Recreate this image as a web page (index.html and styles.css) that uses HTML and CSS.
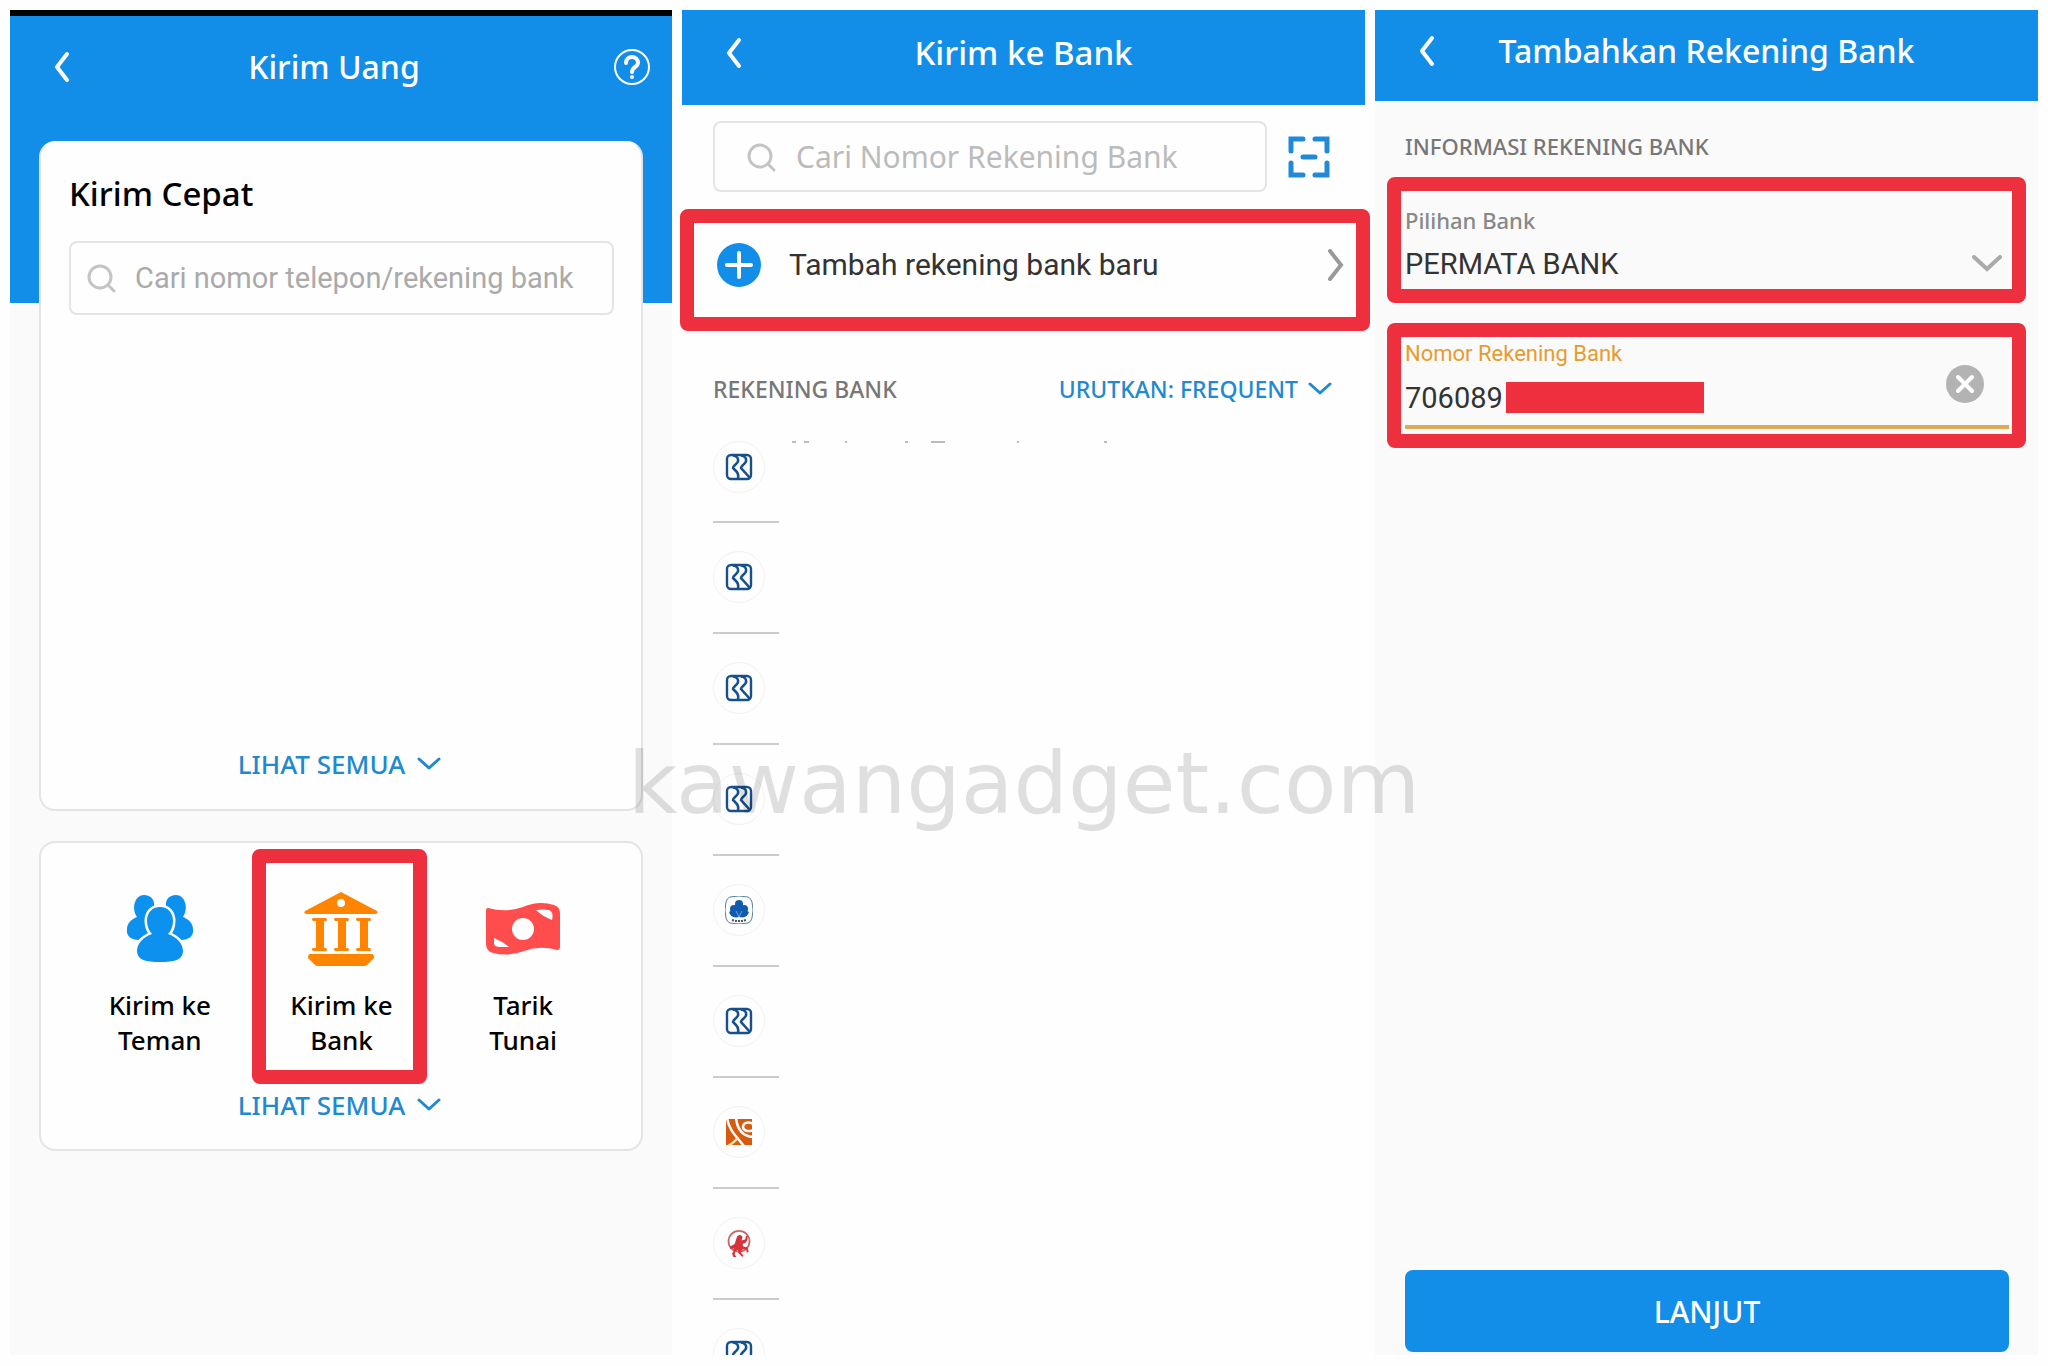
FILE: index.html
```html
<!DOCTYPE html>
<html lang="id">
<head>
<meta charset="utf-8">
<meta name="viewport" content="width=device-width, initial-scale=1">
<title>Kirim Uang ke Bank</title>
<link rel="stylesheet" href="styles.css">
</head>
<body>
<svg class="defs" aria-hidden="true">
  <symbol id="back" viewBox="0 0 16 32"><path d="M13 3 3 16l10 13" fill="none" stroke="currentColor" stroke-width="4" stroke-linecap="round" stroke-linejoin="round"/></symbol>
  <symbol id="down" viewBox="0 0 24 14"><path d="M2 2l10 9L22 2" fill="none" stroke="currentColor" stroke-width="3" stroke-linecap="round" stroke-linejoin="round"/></symbol>
  <symbol id="search" viewBox="0 0 30 30"><circle cx="13" cy="14" r="11" fill="none" stroke="currentColor" stroke-width="3"/><path d="M21 22l6 6" stroke="currentColor" stroke-width="3" stroke-linecap="round"/></symbol>
  <symbol id="bri" viewBox="0 0 28 28"><g fill="none" stroke="#17508c"><rect x="2" y="2" width="24" height="24" rx="4" stroke-width="2.4"/><path d="M8 2.500q6 1 5 6-1 2-3 3.500-2 2-2 3 1 1 3 3 3 3 2 7.500M16 2.500q6 1 5 6-1 2-3 3.500-2 2-2 3l9 10" stroke-width="2.600"/></g></symbol>
</svg>
<main class="screens">

  <section class="screen screen-send">
    <header class="bar bar-tall">
      <button class="icon-button" type="button" aria-label="Kembali"><svg class="back"><use href="#back"/></svg></button>
      <h1 class="title">Kirim Uang</h1>
      <button class="icon-button help-button" type="button" aria-label="Bantuan"><svg class="help" viewBox="0 0 38 38"><circle cx="19" cy="19" r="17" fill="none" stroke="#fff" stroke-width="2"/><path d="M13 15c0-8 12-8 12 0 0 4-6 4-6 9" fill="none" stroke="#fff" stroke-width="4" stroke-linecap="round"/><circle cx="19" cy="29" r="2" fill="#fff"/></svg></button>
    </header>
    <div class="cards">
      <section class="card card-quick">
        <h2 class="card-title">Kirim Cepat</h2>
        <label class="search search-quick"><svg class="glass"><use href="#search"/></svg><input class="search-input roboto" type="text" placeholder="Cari nomor telepon/rekening bank" aria-label="Cari nomor telepon atau rekening bank"></label>
        <a class="more" href="#semua">LIHAT SEMUA <svg class="down"><use href="#down"/></svg></a>
      </section>
      <section class="card card-actions">
        <div class="actions">
          <button class="action" type="button">
            <svg class="action-icon" viewBox="0 0 76 76"><g fill="#0d91ef"><path id="friend" d="M22 5c7 0 11 5 10 11-7 3-11 12-8 22 1 4 3 6 3 7-5 1-8 3-10 5C9 50 4 46 5 39c0-6 5-10 10-12-6-9-2-22 7-22z"/><use href="#friend" transform="matrix(-1 0 0 1 76 0)"/><path d="M38 17c8 0 13 6 13 14 0 5-2 10-5 13 9 3 15 10 15 17 0 9-9 11-23 11s-23-2-23-11c0-7 6-14 15-17-3-3-5-8-5-13 0-8 5-14 13-14z" stroke="#fefefe" stroke-width="5" paint-order="stroke"/></g></svg>
            <span>Kirim ke<br>Teman</span>
          </button>
          <button class="action action-marked" type="button">
            <svg class="action-icon" viewBox="0 0 76 76"><g fill="#ff8500"><path fill-rule="evenodd" d="M38 2l36 19q2 3-2 3H4q-4 0-2-3zM38 9a4 4 0 1 0 0 8 4 4 0 0 0 0-8z"/><path id="pillar" d="M10 28h13q2 2 0 3h-2v27h2q2 2 0 3H10q-2-2 0-3h3V31h-3q-2-2 0-3z"/><use href="#pillar" x="22"/><use href="#pillar" x="44"/><path d="M7 64h62q2 0 2 4l-7 7q-1 1-3 1H15q-2 0-3-1l-7-7q0-4 2-4z"/></g></svg>
            <span>Kirim ke<br>Bank</span>
          </button>
          <button class="action" type="button">
            <svg class="action-icon" viewBox="0 0 76 76"><path fill="#ff4c4c" fill-rule="evenodd" d="M3 18q18 5 35-1 16-7 31-2 6 2 6 8v34q0 3-3 3-17-5-33 1-15 6-31 2-7-2-7-9V20q0-2 2-2zM38 28a11 11 0 1 0 0 22 11 11 0 0 0 0-22zM51 20q6 6 16 10 2-8-3-10-6-1-13 0zM9 48v6q1 3 6 3h9q-7-6-15-9z"/></svg>
            <span>Tarik<br>Tunai</span>
          </button>
        </div>
        <a class="more" href="#menu">LIHAT SEMUA <svg class="down"><use href="#down"/></svg></a>
      </section>
    </div>
  </section>

  <section class="screen screen-banks">
    <header class="bar bar-banks">
      <button class="icon-button" type="button" aria-label="Kembali"><svg class="back"><use href="#back"/></svg></button>
      <h1 class="title">Kirim ke Bank</h1>
    </header>
    <div class="search-row">
      <label class="search search-bank"><svg class="glass"><use href="#search"/></svg><input class="search-input" type="text" placeholder="Cari Nomor Rekening Bank" aria-label="Cari nomor rekening bank"></label>
      <button class="scan-button" type="button" aria-label="Pindai"><svg class="scan" viewBox="0 0 42 42"><path d="M3 15V3h12M27 3h12v12M39 27v12H27M15 39H3V27M15 21h12" fill="none" stroke="#2089d8" stroke-width="5" stroke-linecap="round"/></svg></button>
    </div>
    <button class="add" type="button">
      <svg class="plus" viewBox="0 0 44 44"><circle cx="22" cy="22" r="22" fill="#128ee8"/><path d="M22 10v24M10 22h24" stroke="#fff" stroke-width="4" stroke-linecap="round"/></svg>
      <span class="add-text">Tambah rekening bank baru</span>
      <svg class="forward" viewBox="0 0 16 32"><path d="M2 2l11 14L2 30" fill="none" stroke="#999" stroke-width="4" stroke-linecap="round"/></svg>
    </button>
    <div class="list-head">
      <h2 class="label">REKENING BANK</h2>
      <button class="sort" type="button">URUTKAN: FREQUENT <svg class="down"><use href="#down"/></svg></button>
    </div>
    <ul class="banks">
      <li class="bank"><span class="logo"><svg><use href="#bri"/></svg></span><svg class="remnant" viewBox="0 0 330 3"><path d="M1 1h4M13 1h5M54 1h2M114 1h3M140 1h14M226 1h2M313 1h3" stroke="#bbb" stroke-width="2"/></svg></li>
      <li class="bank"><span class="logo"><svg><use href="#bri"/></svg></span></li>
      <li class="bank"><span class="logo"><svg><use href="#bri"/></svg></span></li>
      <li class="bank"><span class="logo"><svg><use href="#bri"/></svg></span></li>
      <li class="bank"><span class="logo"><svg viewBox="0 0 28 28"><path d="M5 1q9-2 18 0 3 1 4 5 2 8 0 16-1 4-4 5-9 2-18 0-3-1-4-5-2-8 0-16 1-4 4-5z" fill="#fff" stroke="#56809c" stroke-width="1"/><g fill="#0f5bb0"><circle cx="14" cy="8" r="4"/><circle cx="9" cy="13" r="4"/><circle cx="19" cy="13" r="4"/><path d="M14 21 10 8h8zM14 21q-8 2-10-5l5-3zM14 21q8 2 10-5l-5-3z"/><path d="M6 15h16v5H6z"/></g><path d="M14 21l-3-6M14 21l3-6" stroke="#6da6dc" stroke-width="1"/><path d="M7 24q7 2 14 0" fill="none" stroke="#456" stroke-width="2" stroke-dasharray="2 1"/></svg></span></li>
      <li class="bank"><span class="logo"><svg><use href="#bri"/></svg></span></li>
      <li class="bank"><span class="logo"><svg viewBox="0 0 28 28"><path fill="#d9590f" d="M1 1h26v26H1z"/><g fill="none" stroke="#fff" stroke-width="2.500"><path d="M2 0c2 12 8 17 17 28"/><path d="M3 28c5-3 8-5 10-9" stroke="#ffe3b0"/><path d="M11 0c1 9 5 18 17 19"/><path d="M28 6c-5-3-10-1-10 3s6 5 10 3"/></g></svg></span></li>
      <li class="bank"><span class="logo"><svg viewBox="0 0 28 32"><circle cx="14" cy="14" r="12" fill="none" stroke="#c9686c" stroke-width="2"/><path d="M12 8q4-3 6 1l-1 4 4-1 1-4h2q0 6-3 8l-3 1 1 3 5 1 1 5-2 1-1-4-4 0-2 4 3 3-1 2-5-5 0-3-3 1-1 4 2 3-3 1-2-5 2-3 0-3-4 1 0-3 5-3z" fill="#d6333a"/></svg></span></li>
      <li class="bank"><span class="logo"><svg><use href="#bri"/></svg></span></li>
    </ul>
  </section>

  <section class="screen screen-form">
    <header class="bar bar-form">
      <button class="icon-button" type="button" aria-label="Kembali"><svg class="back"><use href="#back"/></svg></button>
      <h1 class="title">Tambahkan Rekening Bank</h1>
    </header>
    <form class="form">
      <h2 class="label">INFORMASI REKENING BANK</h2>
      <div class="field field-bank">
        <label class="field-label" for="bank">Pilihan Bank</label>
        <div class="picker">
          <select class="field-value" id="bank"><option>PERMATA BANK</option></select>
          <svg class="picker-arrow" viewBox="0 0 30 18"><path d="M2 2l13 12L28 2" fill="none" stroke="#aaa" stroke-width="4" stroke-linecap="round"/></svg>
        </div>
      </div>
      <div class="field field-number">
        <div class="number">
          <label class="number-label" for="number">Nomor Rekening Bank</label>
          <div class="number-row"><input class="field-value number-input" id="number" type="text" value="706089"><span class="mask"></span></div>
        </div>
        <button class="clear" type="button" aria-label="Hapus"><svg viewBox="0 0 38 38"><circle cx="19" cy="19" r="19" fill="#b3b3b3"/><path d="M12 12l14 14M26 12 12 26" stroke="#fff" stroke-width="4" stroke-linecap="round"/></svg></button>
      </div>
      <button class="submit" type="submit">LANJUT</button>
    </form>
  </section>
</main>
<div class="watermark">kawangadget.com</div>
</body>
</html>
```
FILE: styles.css
```css
:root {
  --blue: #128ee8;
  --link: #2089d0;
  --red: #ee2f3e;
  --line: #e4e4e4;
}

* { box-sizing: border-box; }

body {
  margin: 0;
  position: relative;
  background: #fefefe;
  color: #111;
  font-family: "Noto Sans", "Open Sans", sans-serif;
  overflow-x: hidden;
}

h1, h2, ul { margin: 0; padding: 0; }
svg { display: block; flex: none; }
button, input, select { font: inherit; color: inherit; border: 0; padding: 0; background: none; border-radius: 0; }
input, select { min-width: 0; outline: 0; }
a { text-decoration: none; }
.defs { position: absolute; width: 0; height: 0; }

.screens {
  display: grid;
  grid-template-columns: 662fr 683fr 663fr;
  gap: 10px;
  min-height: 100vh;
  padding: 10px 10px 11px;
}

.screen {
  display: flex;
  flex-direction: column;
  min-width: 0;
  background: #fafafa;
}

/* Title bars */
.bar {
  display: grid;
  grid-template-columns: 44px 1fr 44px;
  align-items: center;
  padding: 0 30px;
  background: var(--blue);
  color: #fff;
}
.bar-tall { height: 102px; padding: 0 18px 0 30px; grid-template-columns: 44px 1fr 70px; }
.bar-banks { height: 95px; padding-bottom: 10px; }
.bar-form { height: 91px; padding-bottom: 10px; }
.title { font-size: 32px; line-height: 46px; font-weight: 500; text-align: center; white-space: nowrap; }
.bar-banks .title { font-size: 33px; }
.icon-button { display: flex; align-items: center; justify-content: center; height: 44px; }
.help-button { justify-content: flex-end; padding-right: 3px; }
.back { width: 16px; height: 32px; }
.help { width: 38px; height: 38px; }

/* Send money */
.screen-send {
  border-top: 6px solid #000;
  background: linear-gradient(var(--blue), var(--blue)) 0 0 / 100% 287px no-repeat #fafafa;
}
.cards { display: flex; flex-direction: column; gap: 30px; padding: 23px 29px 0; }
.card {
  display: flex;
  flex-direction: column;
  padding: 28px 27px 26px 28px;
  border: 2px solid var(--line);
  border-radius: 16px;
  background: #fefefe;
}
.card-quick { min-height: 670px; padding-bottom: 27px; border-top-color: #fefefe; }
.card-title { font-size: 33px; line-height: 46px; font-weight: 500; color: #000; }
.search {
  display: flex;
  align-items: center;
  border: 2px solid var(--line);
  border-radius: 8px;
  color: #c4c4c4;
}
.search-quick { height: 74px; margin-top: 24px; padding: 0 16px; gap: 18px; }
.glass { width: 30px; height: 30px; }
.search-input { flex: 1; height: 60px; font-size: 30px; }
.search-input::placeholder { color: #bbb; opacity: 1; }
.roboto { font-family: Roboto, sans-serif; font-size: 29px; }
.roboto::placeholder { color: #aaa; }
.more {
  display: flex;
  align-items: center;
  align-self: center;
  gap: 12px;
  margin: auto 4px 0 0;
  color: var(--link);
  font-size: 26px;
  line-height: 36px;
  font-weight: 500;
}
.down { width: 24px; height: 14px; }

.card-actions { padding-top: 6px; }
.actions { display: grid; grid-template-columns: repeat(3, 1fr); margin-bottom: 3px; }
.action {
  display: flex;
  flex-direction: column;
  align-items: center;
  gap: 22px;
  padding: 41px 0 26px;
  color: #000;
  font-size: 26px;
  line-height: 35px;
  font-weight: 500;
}
.action-icon { width: 76px; height: 76px; }
.action-marked { position: relative; }
.action-marked::after {
  content: "";
  position: absolute;
  inset: 0 5px 0 1px;
  border: 14px solid var(--red);
  border-radius: 8px;
}

/* Bank list */
.screen-banks { background: #fefefe; }
.search-row { display: flex; align-items: center; gap: 21px; padding: 16px 35px 17px 31px; }
.search-bank { flex: 1; height: 71px; padding: 0 32px; gap: 19px; }
.scan-button { display: flex; }
.scan { width: 42px; height: 42px; }
.add {
  display: flex;
  align-items: center;
  gap: 28px;
  height: 122px;
  margin: 0 -5px 0 -2px;
  padding: 0 12px 10px 23px;
  border: 14px solid var(--red);
  border-radius: 8px;
  background: #fefefe;
  color: #333;
  font: 30px/40px Roboto, sans-serif;
  position: relative;
}
.add-text { flex: 1; text-align: left; }
.plus { width: 44px; height: 44px; }
.forward { width: 16px; height: 32px; }
.list-head {
  display: flex;
  align-items: center;
  justify-content: space-between;
  height: 110px;
  padding: 0 33px 0 31px;
  border-top: 5px solid #fafafa;
}
.label { color: #777; font-size: 23px; line-height: 32px; font-weight: 500; }
.sort { display: flex; align-items: center; gap: 10px; color: var(--link); font-size: 23px; line-height: 32px; font-weight: 500; }
.banks { flex: 1 1 0px; min-height: 0; overflow: hidden; padding-left: 31px; list-style: none; }
.bank { position: relative; width: 66px; height: 111px; padding-top: 28px; border-bottom: 2px solid #ccc; }
.bank:first-child { height: 82px; padding-top: 0; }
.logo {
  display: flex;
  align-items: center;
  justify-content: center;
  width: 52px;
  height: 52px;
  border: 1px solid #f2f2f2;
  border-radius: 50%;
}
.logo svg { width: 28px; height: 28px; }
.remnant { position: absolute; left: 78px; top: 0; width: 330px; height: 3px; }

/* Account form */
.form { display: flex; flex: 1; flex-direction: column; padding: 29px 12px 3px; }
.form .label { margin: 0 18px 15px; font-size: 22px; }
.field { border: 14px solid var(--red); border-radius: 8px; }
.field-bank { height: 126px; padding: 13px 4px 0; }
.field-label { display: block; color: #888; font-size: 22px; line-height: 32px; font-weight: 500; }
.field-value { width: 100%; height: 40px; color: #333; font: 29px/40px Roboto, sans-serif; }
select.field-value { appearance: none; grid-area: 1 / 1; }
.picker { display: grid; align-items: center; margin-top: 8px; }
.picker-arrow { grid-area: 1 / 1; justify-self: end; width: 30px; height: 18px; margin-right: 6px; pointer-events: none; }
.field-number {
  display: flex;
  align-items: center;
  height: 125px;
  margin-top: 20px;
  padding: 0 4px 4px;
  background: linear-gradient(#deaa55, #deaa55) 4px 88px / calc(100% - 7px) 4px no-repeat;
}
.number { flex: 1; height: 92px; }
.number-label { display: block; color: #e69b31; font: 22px/32px Roboto, sans-serif; }
.number-row { display: flex; align-items: center; gap: 2px; margin-top: 8px; }
.number-input { width: 99px; }
.mask { width: 198px; height: 31px; background: var(--red); }
.clear { width: 38px; height: 38px; margin-right: 24px; }
.submit {
  height: 82px;
  margin: auto 17px 0 18px;
  border-radius: 8px;
  background: var(--blue);
  color: #fff;
  font-size: 30px;
  font-weight: 500;
}

.watermark {
  position: absolute;
  top: 728px;
  left: 0;
  right: 0;
  text-align: center;
  color: rgba(0, 0, 0, 0.12);
  font: 86px/110px "DejaVu Sans", sans-serif;
  pointer-events: none;
}
```
